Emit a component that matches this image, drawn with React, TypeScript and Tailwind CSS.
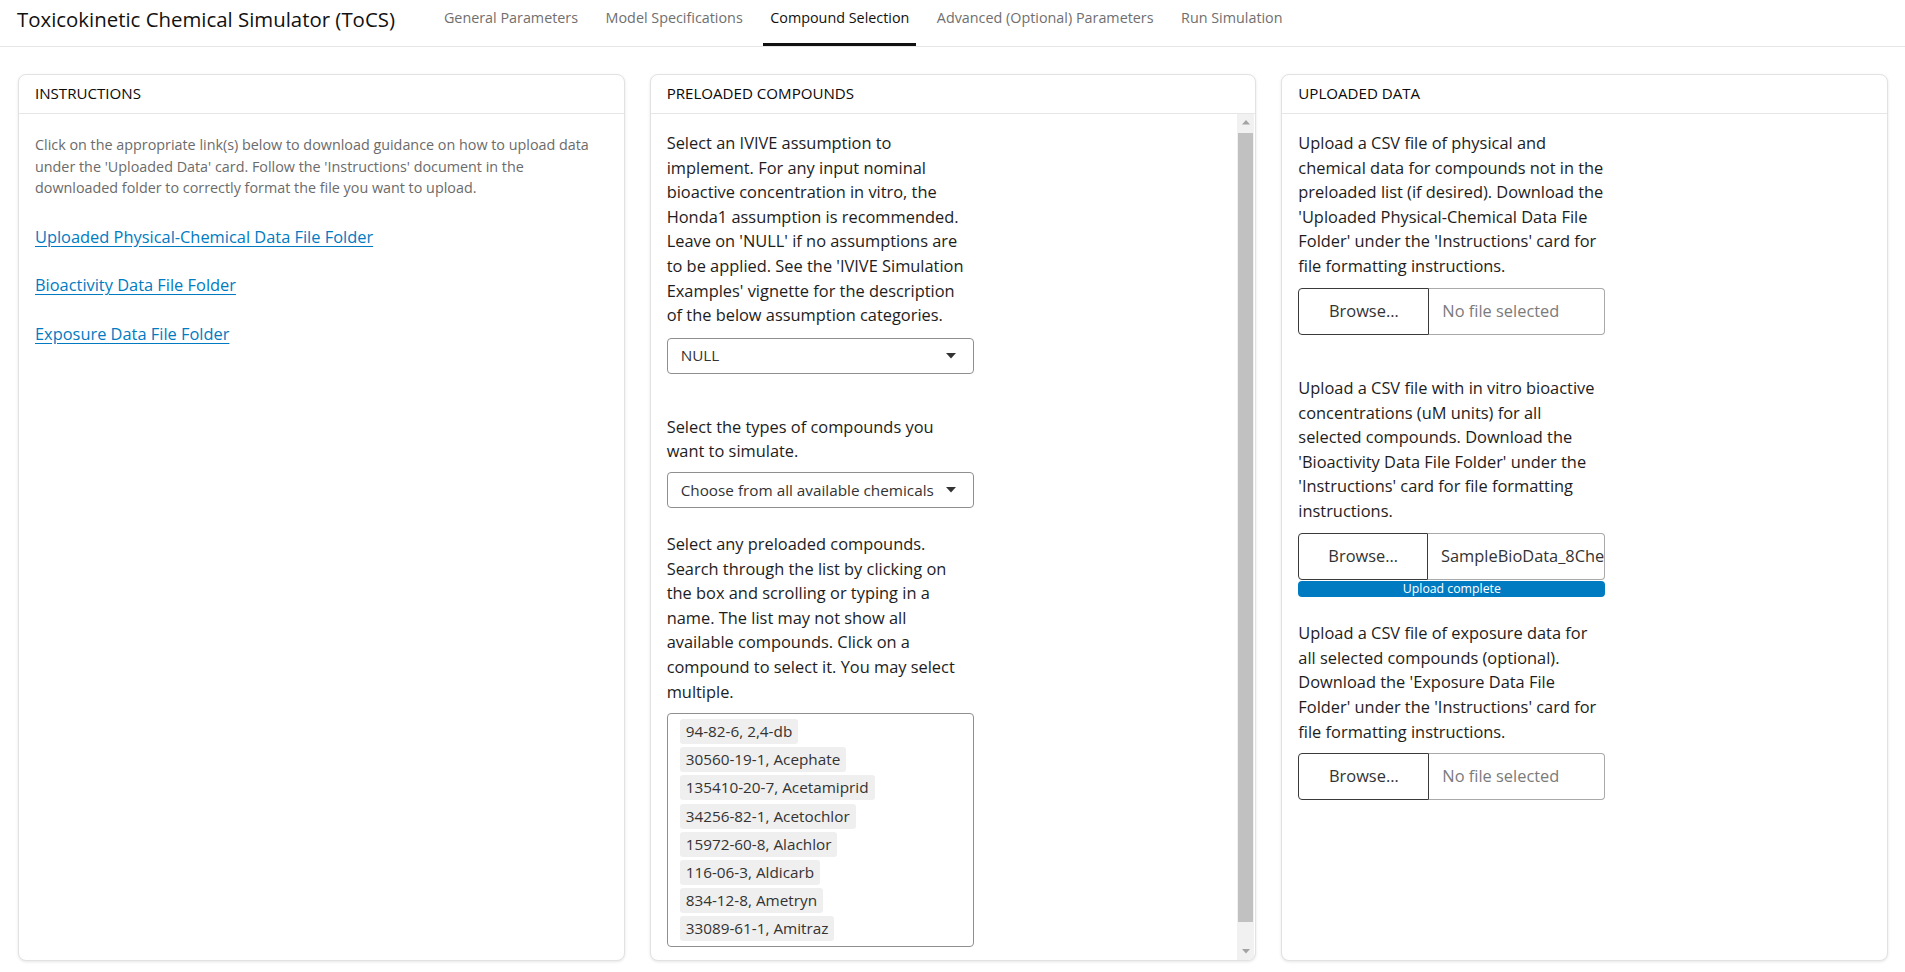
import React from "react";

const Lines = ({ lines, className = "" }: { lines: string[]; className?: string }) => (
  <div className={className}>
    {lines.map((l, i) => (
      <div key={i} className="whitespace-nowrap">
        {l}
      </div>
    ))}
  </div>
);

const Caret = () => (
  <svg width="10" height="6" viewBox="0 0 10 6" className="shrink-0">
    <path d="M0 0 L10 0 L5 5.5 Z" fill="#333" />
  </svg>
);

const Select = ({ value, className = "" }: { value: string; className?: string }) => (
  <div
    className={
      "w-[307px] h-[36px] border border-[#8f8f8f] rounded-[4px] flex items-center justify-between pl-[13px] pr-[17px] text-[15.3px] text-[#333] bg-white " +
      className
    }
  >
    <span className="whitespace-nowrap">{value}</span>
    <Caret />
  </div>
);

const FileInput = ({ value, placeholder }: { value?: string; placeholder?: boolean }) => (
  <div className="w-[307px] h-[47px] flex">
    <div className="w-[131px] h-full border border-[#3a3a3a] rounded-l-[4px] flex items-center justify-center text-[16.4px] text-[#333] bg-white">
      Browse…
    </div>
    <div
      className={
        "flex-1 h-full border border-l-0 border-[#a9a9a9] rounded-r-[4px] flex items-center pl-[13px] whitespace-nowrap text-[16.4px] " +
        (placeholder ? "text-[#7b7b7b]" : "text-[#333]")
      }
    >
      {value}
    </div>
  </div>
);

const Card = ({ title, children, bodyClass = "" }: { title: string; children: React.ReactNode; bodyClass?: string }) => (
  <div className="h-[887px] flex flex-col bg-white border border-[#e2e2e2] rounded-[8px] shadow-[0_1px_3px_rgba(0,0,0,0.10)] overflow-hidden">
    <div className="h-[39px] shrink-0 flex items-center px-[16px] pb-[2px] border-b border-[#e6e6e6] text-[15.1px] font-medium text-[#0a0a0a]">
      {title}
    </div>
    <div className={"flex-1 min-h-0 " + bodyClass}>{children}</div>
  </div>
);

const ScrollArrow = ({ down }: { down?: boolean }) => (
  <div className="h-[17px] shrink-0 flex items-center justify-center">
    <svg width="8" height="5" viewBox="0 0 8 5">
      <path d={down ? "M0 0 L8 0 L4 4.5 Z" : "M0 4.5 L8 4.5 L4 0 Z"} fill="#a3a3a3" />
    </svg>
  </div>
);

const compounds = [
  "94-82-6, 2,4-db",
  "30560-19-1, Acephate",
  "135410-20-7, Acetamiprid",
  "34256-82-1, Acetochlor",
  "15972-60-8, Alachlor",
  "116-06-3, Aldicarb",
  "834-12-8, Ametryn",
  "33089-61-1, Amitraz",
];

export default function App() {
  const tabs = [
    "General Parameters",
    "Model Specifications",
    "Compound Selection",
    "Advanced (Optional) Parameters",
    "Run Simulation",
  ];
  return (
    <div className="w-[1905px] h-[972px] overflow-hidden bg-white font-['Open_Sans',sans-serif] text-[#1d1d1d]">
      {/* Navbar */}
      <div className="h-[47px] border-b border-[#e6e6e6] flex items-start pl-[17px]">
        <div className="pt-[5px] text-[20.4px] leading-[28px] text-[#111] whitespace-nowrap">
          Toxicokinetic Chemical Simulator (ToCS)
        </div>
        <div className="flex ml-[42px] gap-[13.5px]">
          {tabs.map((t) => {
            const active = t === "Compound Selection";
            return (
              <div
                key={t}
                className={
                  "h-[46px] pt-[7px] px-[7px] text-[14.35px] leading-[21px] whitespace-nowrap " +
                  (active ? "text-[#111] border-b-[3px] border-[#111]" : "text-[#6f6f6f]")
                }
              >
                {t}
              </div>
            );
          })}
        </div>
      </div>

      {/* Cards */}
      <div className="grid grid-cols-3 gap-[25px] pl-[18px] pr-[17px] pt-[27px]">
        <Card title="INSTRUCTIONS" bodyClass="px-[16px] pt-[20px]">
          <Lines
            className="text-[14.35px] leading-[21.5px] text-[#6b6b6b]"
            lines={[
              "Click on the appropriate link(s) below to download guidance on how to upload data",
              "under the 'Uploaded Data' card. Follow the 'Instructions' document in the",
              "downloaded folder to correctly format the file you want to upload.",
            ]}
          />
          <div className="mt-[26px] flex flex-col gap-[24.2px] text-[16.4px] leading-[24.6px]">
            {[
              "Uploaded Physical-Chemical Data File Folder",
              "Bioactivity Data File Folder",
              "Exposure Data File Folder",
            ].map((l) => (
              <div key={l}>
                <a className="text-[#007bc2] underline underline-offset-[3px] whitespace-nowrap">{l}</a>
              </div>
            ))}
          </div>
        </Card>

        <Card title="PRELOADED COMPOUNDS" bodyClass="flex">
          <div className="flex-1 min-w-0 overflow-hidden">
            <div className="px-[16px] pt-[17px] text-[16.4px] leading-[24.6px] text-[#1d1d1d]">
              <Lines
                lines={[
                  "Select an IVIVE assumption to",
                  "implement. For any input nominal",
                  "bioactive concentration in vitro, the",
                  "Honda1 assumption is recommended.",
                  "Leave on 'NULL' if no assumptions are",
                  "to be applied. See the 'IVIVE Simulation",
                  "Examples' vignette for the description",
                  "of the below assumption categories.",
                ]}
              />
              <Select value="NULL" className="mt-[10px]" />
              <Lines
                className="mt-[41px]"
                lines={["Select the types of compounds you", "want to simulate."]}
              />
              <Select value="Choose from all available chemicals" className="mt-[8px]" />
              <Lines
                className="mt-[24px]"
                lines={[
                  "Select any preloaded compounds.",
                  "Search through the list by clicking on",
                  "the box and scrolling or typing in a",
                  "name. The list may not show all",
                  "available compounds. Click on a",
                  "compound to select it. You may select",
                  "multiple.",
                ]}
              />
              <div className="mt-[9px] w-[307px] h-[234px] border border-[#8f8f8f] rounded-[4px] pl-[12px] pt-[5px] flex flex-col items-start gap-[3.2px]">
                {compounds.map((c) => (
                  <div
                    key={c}
                    className="h-[25px] px-[6px] bg-[#efefef] rounded-[3px] text-[15.3px] leading-[25px] text-[#333] whitespace-nowrap"
                  >
                    {c}
                  </div>
                ))}
              </div>
            </div>
          </div>
          {/* scrollbar */}
          <div className="w-[17px] shrink-0 mr-[1px] bg-[#f1f1f1] flex flex-col">
            <ScrollArrow />
            <div className="flex-1 mt-[2px] mb-[21px] mx-[1px] bg-[#c1c1c1]" />
            <ScrollArrow down />
          </div>
        </Card>

        <Card title="UPLOADED DATA" bodyClass="px-[16px] pt-[17px] text-[16.4px] leading-[24.6px] text-[#1d1d1d]">
          <Lines
            lines={[
              "Upload a CSV file of physical and",
              "chemical data for compounds not in the",
              "preloaded list (if desired). Download the",
              "'Uploaded Physical-Chemical Data File",
              "Folder' under the 'Instructions' card for",
              "file formatting instructions.",
            ]}
          />
          <div className="mt-[9.5px]">
            <FileInput value="No file selected" placeholder />
            <div className="mt-[1px] h-[16px]" />
          </div>
          <Lines
            className="mt-[24px]"
            lines={[
              "Upload a CSV file with in vitro bioactive",
              "concentrations (uM units) for all",
              "selected compounds. Download the",
              "'Bioactivity Data File Folder' under the",
              "'Instructions' card for file formatting",
              "instructions.",
            ]}
          />
          <div className="mt-[9.5px]">
            <FileInput value="SampleBioData_8Che" />
            <div className="mt-[1px] w-[307px] h-[16px] bg-[#007bc2] rounded-[4px] text-white text-[12.3px] leading-[16px] text-center">
              Upload complete
            </div>
          </div>
          <Lines
            className="mt-[24px]"
            lines={[
              "Upload a CSV file of exposure data for",
              "all selected compounds (optional).",
              "Download the 'Exposure Data File",
              "Folder' under the 'Instructions' card for",
              "file formatting instructions.",
            ]}
          />
          <div className="mt-[8.5px]">
            <FileInput value="No file selected" placeholder />
          </div>
        </Card>
      </div>
    </div>
  );
}
